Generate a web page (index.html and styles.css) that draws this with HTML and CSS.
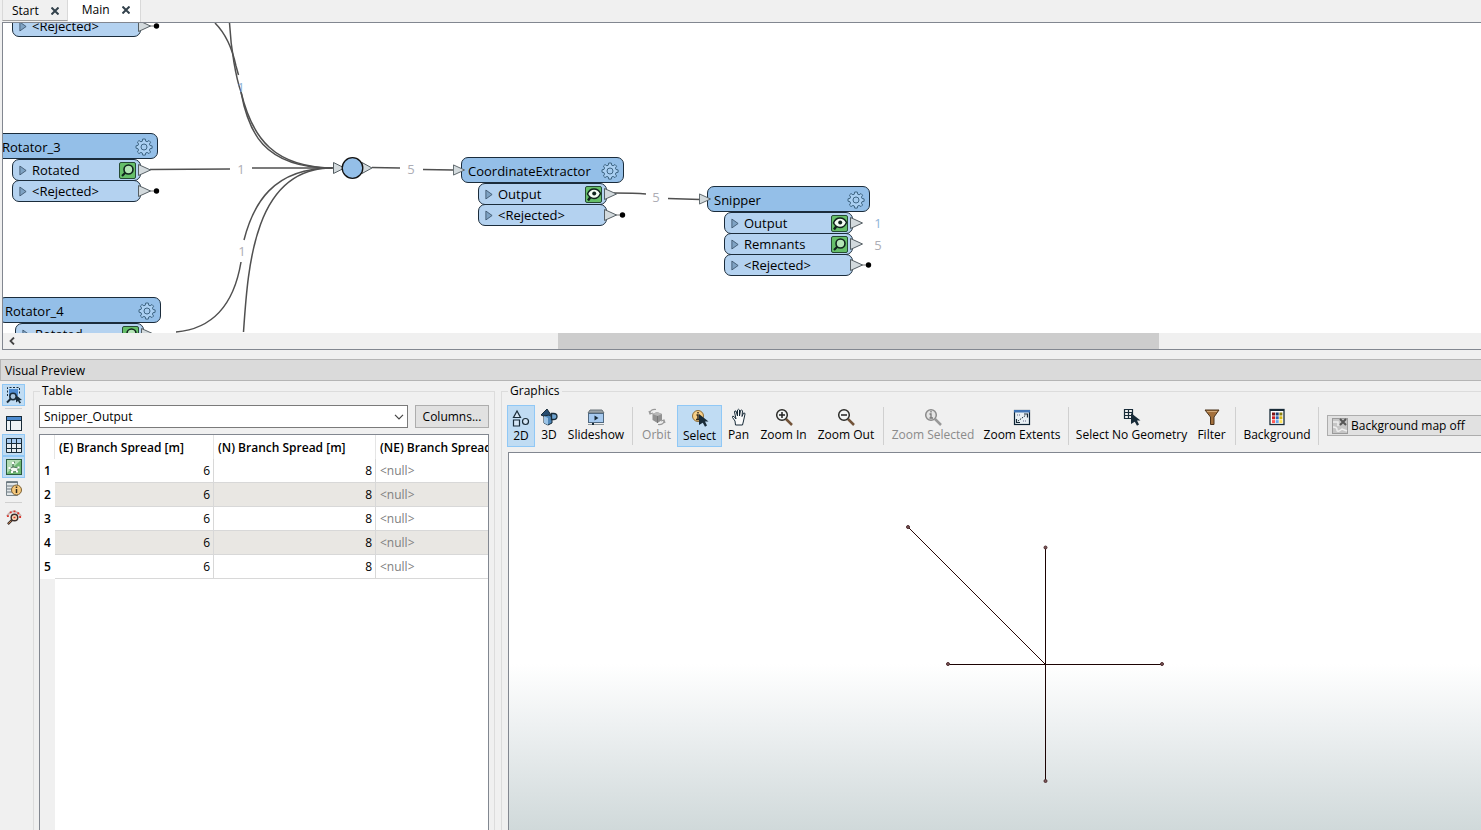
FILE: index.html
```html
<!DOCTYPE html>
<html lang="en">
<head>
<meta charset="utf-8">
<title>Workspace - Main</title>
<link rel="stylesheet" href="styles.css">
</head>
<body>
<svg class="defs" aria-hidden="true">
  <symbol id="gear" viewBox="0 0 18 18"><path d="M7.700 1h2.600l.4 2.200 1.400.6 1.900-1.300 1.600 1.700-1.200 1.900.6 1.400 2.100.4v2.400l-2.100.4-.6 1.400 1.200 1.900-1.600 1.600-1.900-1.200-1.400.6-.4 2.100H7.700l-.4-2.100-1.400-.6L4 15.600 2.400 14l1.200-1.900-.6-1.400L1 10.200V7.800l2-.4.6-1.400L2.400 4.100 4 2.500l1.900 1.300 1.400-.6z" fill="#abd0f2" stroke="#3f6684" stroke-width="1"/><circle cx="9" cy="9" r="3" fill="#a5cbee" stroke="#3f6684"/></symbol>
  <symbol id="play" viewBox="0 0 9 12"><path d="M1 1l7 5-7 5z" fill="#7fa3c4" stroke="#3f5870"/></symbol>
  <symbol id="out" viewBox="0 0 13 12"><path d="M.5.5l12 5.500-12 5.500z" fill="#d3dadd" stroke="#555e63"/></symbol>
  <symbol id="stop" viewBox="0 0 22 12"><path d="M12 6h5" stroke="#777"/><path d="M.5.5l12 5.500-12 5.500z" fill="#d3dadd" stroke="#555e63"/><circle cx="18.500" cy="6" r="2.700" fill="#000"/></symbol>
  <symbol id="lens" viewBox="0 0 17 17"><rect x=".5" y=".5" width="16" height="16" rx="1.500" fill="#66bf69" stroke="#254b34"/><path d="M6.500 10.500L3 14" stroke="#10241d" stroke-width="2.200"/><circle cx="9.500" cy="7.500" r="4.500" fill="#b5e6b7" stroke="#10241d" stroke-width="1.600"/></symbol>
  <symbol id="eye" viewBox="0 0 17 17"><rect x=".5" y=".5" width="16" height="16" rx="1.500" fill="#66bf69" stroke="#254b34"/><path d="M5.500 11L3 14.500" stroke="#10241d" stroke-width="2.400"/><path d="M2.500 8Q4.500 3 9 3q4.500 0 6.500 4.500Q13.500 12.500 9 12.500 5 12.500 2.500 8z" fill="#f3fbf3" stroke="#10241d" stroke-width="1.500"/><circle cx="9.200" cy="7.500" r="2" fill="#10241d"/></symbol>
  <symbol id="cursor" viewBox="0 0 10 13"><path d="M0 0l9.500 7.500H6l2 4-2 1.200-2.200-4L0 11z" fill="#182b38"/></symbol>
</svg>

<nav class="tabs">
  <div class="tab"><button class="tab-name">Start</button><button class="tab-close" aria-label="Close Start"><svg width="8" height="8" viewBox="0 0 8 8"><path d="M.5.5l7 7M7.500.5l-7 7"/></svg></button></div>
  <div class="tab current"><button class="tab-name">Main</button><button class="tab-close" aria-label="Close Main"><svg width="8" height="8" viewBox="0 0 8 8"><path d="M.5.5l7 7M7.500.5l-7 7"/></svg></button></div>
</nav>

<section class="workspace">
  <div class="canvas">
    <svg class="wires" width="1478" height="310" viewBox="3 23 1478 310">
      <g fill="none" stroke="#505050" stroke-width="1.500">
        <path d="M215 23C228 36 233 52 236 66L238.500 75M241 92C252 138 274 168 335 168"/>
        <path d="M229.500 23C231 50 236 78 241 92C248 130 262 168 332 168"/>
        <path d="M150 169.500L230 169M252 168H334"/>
        <path d="M176 332C222 328 236 292 241 262M244 240C253 205 272 168 332 168"/>
        <path d="M243.500 332C248 266 254 168 332 168"/>
        <path d="M372 167.500L400 168M423 169.500L453 170"/>
        <path d="M614 193C625 193 635 193 646 194M668 198.500L700 199.500"/>
      </g>
      <path d="M333.500 162.500l11 5.500-11 5.500zM362 162.500l10 5.500-10 5.500z" fill="#d3dadd" stroke="#555e63"/>
      <circle cx="352.500" cy="168" r="10.300" fill="#94bfe8" stroke="#111" stroke-width="1.300"/>
      <g class="counts">
        <text class="fresh" x="241" y="92">1</text><text x="241" y="174">1</text><text x="242" y="256">1</text>
        <text x="411" y="174">5</text><text x="656" y="202">5</text>
        <text class="fresh" x="878" y="228">1</text><text x="878" y="250">5</text>
      </g>
    </svg>

    <article class="node rotator-2">
      <div class="port"><svg class="play"><use href="#play"/></svg>&lt;Rejected&gt;<svg class="stop"><use href="#stop"/></svg></div>
    </article>
    <article class="node rotator-3">
      <h3 class="node-title">Rotator_3<svg class="gear"><use href="#gear"/></svg></h3>
      <div class="port"><svg class="play"><use href="#play"/></svg>Rotated<svg class="lens"><use href="#lens"/></svg><svg class="out"><use href="#out"/></svg></div>
      <div class="port"><svg class="play"><use href="#play"/></svg>&lt;Rejected&gt;<svg class="stop"><use href="#stop"/></svg></div>
    </article>
    <article class="node rotator-4">
      <h3 class="node-title">Rotator_4<svg class="gear"><use href="#gear"/></svg></h3>
      <div class="port"><svg class="play"><use href="#play"/></svg>Rotated<svg class="lens"><use href="#lens"/></svg><svg class="out"><use href="#out"/></svg></div>
    </article>
    <article class="node extractor">
      <h3 class="node-title"><svg class="in"><use href="#out"/></svg>CoordinateExtractor<svg class="gear"><use href="#gear"/></svg></h3>
      <div class="port"><svg class="play"><use href="#play"/></svg>Output<svg class="lens"><use href="#eye"/></svg><svg class="out"><use href="#out"/></svg></div>
      <div class="port"><svg class="play"><use href="#play"/></svg>&lt;Rejected&gt;<svg class="stop"><use href="#stop"/></svg></div>
    </article>
    <article class="node snipper">
      <h3 class="node-title"><svg class="in"><use href="#out"/></svg>Snipper<svg class="gear"><use href="#gear"/></svg></h3>
      <div class="port"><svg class="play"><use href="#play"/></svg>Output<svg class="lens"><use href="#eye"/></svg><svg class="out"><use href="#out"/></svg></div>
      <div class="port"><svg class="play"><use href="#play"/></svg>Remnants<svg class="lens"><use href="#lens"/></svg><svg class="out"><use href="#out"/></svg></div>
      <div class="port"><svg class="play"><use href="#play"/></svg>&lt;Rejected&gt;<svg class="stop"><use href="#stop"/></svg></div>
    </article>
  </div>
  <div class="scrollbar">
    <button class="scroll-left" aria-label="Scroll left"><svg width="6" height="8" viewBox="0 0 6 8"><path d="M5 .5L1.500 4 5 7.500" fill="none" stroke="#444" stroke-width="1.800"/></svg></button>
    <div class="track"><div class="thumb"></div></div>
  </div>
</section>

<h2 class="preview-title">Visual Preview</h2>

<main class="preview">
  <div class="side">
    <button class="tool on" aria-label="Inspect selection"><svg width="18" height="18" viewBox="0 0 18 18"><rect x="4" y="3" width="9" height="7" fill="#4d8bd0"/><path d="M2.500 10V1.500h12V9" fill="none" stroke="#182b38" stroke-dasharray="2 1.500"/><circle cx="8" cy="10.500" r="3.200" fill="#a9c5dd" stroke="#182b38" stroke-width="1.500"/><path d="M5.500 13L2 16.500" stroke="#182b38" stroke-width="2"/><path d="M11 9l6 5-2.500.3 1.500 2.500-1.500.7-1.500-2.500-2 1.500z" fill="#182b38"/></svg></button>
    <hr>
    <button class="tool" aria-label="Panels"><svg width="16" height="15" viewBox="0 0 16 15"><rect x=".5" y=".5" width="15" height="14" fill="#eef2f4" stroke="#182b38"/><path d="M1 1h14v3H1z" fill="#4d8bd0"/><path d="M.5 4.500h15M4.500 4.500v10" stroke="#182b38"/></svg></button>
    <button class="tool on" aria-label="Table view"><svg width="16" height="15" viewBox="0 0 16 15"><path d="M.5.500h15v14H.5z" fill="#e6ecf0"/><path d="M1 1h14v4H1z" fill="#a6caf0"/><path d="M.5.500h15v14H.5zM.5 5.500h15M.5 10.500h15M5.500 .5v14M10.500 .5v14" fill="none" stroke="#182b38"/></svg></button>
    <button class="tool on" aria-label="Graphics view"><svg width="16" height="16" viewBox="0 0 16 16"><rect x=".5" y=".5" width="15" height="15" fill="#6fb873" stroke="#285a3c"/><path d="M1 1h14L1 14z" fill="#b3dcb4"/><path d="M3.500 9.500L7 8l5.500 1-1.500 3.500-5 .5z" fill="#f4faf3" stroke="#53785e"/><path d="M7 8V3.500l2-.5" fill="none" stroke="#33583e"/><path d="M2.500 8h2v2h-2zM11.500 7.500h2v2h-2zM10 11.500h2v2h-2zM5 12h2v2H5zM6 3h2v2H6z" fill="#fff"/></svg></button>
    <button class="tool" aria-label="Feature information"><svg width="16" height="16" viewBox="0 0 16 16"><path d="M.5.500h11v14H.5z" fill="#e1e6e8" stroke="#7a868d"/><path d="M0 1.500h12M1 5h10M1 8h8M1 11h8" stroke="#6b777e"/><circle cx="10.500" cy="9" r="5" fill="#f5c77a" stroke="#7a6035"/><path d="M10.500 8v4M10.500 5.500V7" stroke="#332a1c" stroke-width="1.500"/></svg></button>
    <hr>
    <button class="tool" aria-label="Inspect problems"><svg width="16" height="17" viewBox="0 0 17 17"><path d="M1 7q7-10 15 0" fill="none" stroke="#c9b5b2" stroke-width="2"/><path d="M4 3h2M8 2h2M12 4h2M14 8h2M1 7h2" stroke="#d9342b" stroke-width="2"/><circle cx="9" cy="8.500" r="3.500" fill="#f6d3b3" stroke="#3b2e2a" stroke-width="1.500"/><path d="M6.500 11L2 15.500" stroke="#3b2e2a" stroke-width="2.500"/><path d="M5.500 12l-3 3" stroke="#d08a4e"/><path d="M8 8.500h2" stroke="#d9342b" stroke-width="1.500"/></svg></button>
  </div>

  <fieldset class="group table-group">
    <legend>Table</legend>
    <div class="picker">
      <div class="combo"><select aria-label="Feature type"><option>Snipper_Output</option></select><svg width="10" height="6" viewBox="0 0 10 6"><path d="M1 .8l4 4 4-4" fill="none" stroke="#444" stroke-width="1.200"/></svg></div>
      <button class="columns">Columns...</button>
    </div>
    <div class="grid">
      <table>
        <colgroup><col class="c-row"><col class="c-e"><col class="c-n"><col></colgroup>
        <thead><tr><th></th><th>(E) Branch Spread [m]</th><th>(N) Branch Spread [m]</th><th>(NE) Branch Spread</th></tr></thead>
        <tbody>
          <tr><th>1</th><td>6</td><td>8</td><td class="null">&lt;null&gt;</td></tr>
          <tr><th>2</th><td>6</td><td>8</td><td class="null">&lt;null&gt;</td></tr>
          <tr><th>3</th><td>6</td><td>8</td><td class="null">&lt;null&gt;</td></tr>
          <tr><th>4</th><td>6</td><td>8</td><td class="null">&lt;null&gt;</td></tr>
          <tr><th>5</th><td>6</td><td>8</td><td class="null">&lt;null&gt;</td></tr>
        </tbody>
      </table>
      <div class="gutter"></div>
    </div>
  </fieldset>

  <fieldset class="group graphics-group">
    <legend>Graphics</legend>
    <div class="toolbar">
      <button class="cmd w28 on"><svg viewBox="0 0 18 18"><path d="M5 2L1.500 8.500h7zM1.500 11h6v6h-6z" fill="#d5e6f5" stroke="#182b38" stroke-width="1.200"/><circle cx="13.500" cy="12.500" r="3" fill="#d5e6f5" stroke="#182b38" stroke-width="1.200"/></svg>2D</button>
      <button class="cmd w28"><svg viewBox="0 0 18 18"><path d="M7 1L1 7l5 2 5-2z" fill="#274d70" stroke="#182b38"/><path d="M4 8l5-1 3 2v6l-4 2-4-2z" fill="#4f87b8" stroke="#182b38"/><path d="M4 8l4 2v7l-4-2z" fill="#9cc4e6"/><path d="M11.500 5.500h2q3.500 0 3.500 3t-3.500 3h-2z" fill="#6fa3cf" stroke="#182b38" stroke-width="1.300"/></svg>3D</button>
      <button class="cmd w66"><svg viewBox="0 0 18 18"><path d="M3 2h12l2 3H1z" fill="#9aa3a8" stroke="#6b757b"/><rect x="1.500" y="5.500" width="15" height="9" fill="#a6caf0" stroke="#4f6880"/><path d="M7.500 7.500l4 2.500-4 2.500z" fill="#182b38"/><path d="M1 16.500h16" stroke="#8e989d"/><path d="M5 15h2v2H5z" fill="#182b38"/></svg>Slideshow</button>
      <i class="sep"></i>
      <button class="cmd w41" disabled><svg viewBox="0 0 18 18"><path d="M4.500 6L9 4l5 2v6l-4.500 3-5-3z" fill="#929292"/><path d="M4.500 6l5 2L14 6 9 4z" fill="#b8b8b8"/><path d="M9.500 8v7" stroke="#777"/><path d="M8 1.500Q2 1 2 5.500M1 3l1 3 3-1M10 16.500q6 .5 6-4M17 15l-1-3-3 1" fill="none" stroke="#999" stroke-width="1.200"/></svg>Orbit</button>
      <button class="cmd w45 on"><svg viewBox="0 0 18 18"><circle cx="7" cy="7" r="5.500" fill="#f7cf86" stroke="#8a6a37"/><path d="M5.500 6H7v4M5 10.500h4M7 3v1.500" fill="none" stroke="#332a1c" stroke-width="1.500"/><use href="#cursor" x="8" y="5" width="10" height="13"/></svg>Select</button>
      <button class="cmd w33"><svg viewBox="0 0 18 18"><path d="M5.500 17L5 13 2.500 9.500Q2 7.500 4 8.500L6 11 4.500 4Q4.500 2.500 6 3l1.500 5L7.500 2Q8.500.500 9.500 2v6l1-5.500q1.300-1 2 .2L12 8.500 13.500 5q1.500-.5 1.500 1L13.500 13 12.500 17z" fill="#fafafa" stroke="#182b38"/></svg>Pan</button>
      <button class="cmd w57"><svg viewBox="0 0 18 18"><path d="M11 11l6 6" stroke="#73543a" stroke-width="2.500"/><circle cx="7" cy="7" r="5.300" fill="#f3f6f6" stroke="#2b2b28" stroke-width="1.500"/><path d="M4 7h6M7 4v6" stroke="#222" stroke-width="1.500"/></svg>Zoom In</button>
      <button class="cmd w68"><svg viewBox="0 0 18 18"><path d="M11 11l6 6" stroke="#73543a" stroke-width="2.500"/><circle cx="7" cy="7" r="5.300" fill="#f3f6f6" stroke="#2b2b28" stroke-width="1.500"/><path d="M4 7h6" stroke="#222" stroke-width="1.500"/></svg>Zoom Out</button>
      <i class="sep"></i>
      <button class="cmd w92" disabled><svg viewBox="0 0 18 18"><path d="M11 11l6 6" stroke="#999" stroke-width="2.500"/><circle cx="7" cy="7" r="5.300" fill="#e4e4e4" stroke="#8b8b8b" stroke-width="1.500"/><path d="M5.500 6H7v4M5.500 10h3.500M7 3v1.500" fill="none" stroke="#777" stroke-width="1.300"/></svg>Zoom Selected</button>
      <button class="cmd w86"><svg viewBox="0 0 18 18"><rect x="1.500" y="2.500" width="15" height="14" fill="#e8f0f4" stroke="#0c2233" stroke-width="1.200"/><path d="M1 2h16v2.500H1z" fill="#3f74b5"/><path d="M5 13l8-6" stroke="#182b38" stroke-dasharray="1.500 1"/><path d="M3.500 11v3.500h3.500M11 6h3.500v3.500" fill="none" stroke="#182b38" stroke-width="1.200"/><path d="M4 7h4M10 13h4" stroke="#668" stroke-dasharray="1 1"/></svg>Zoom Extents</button>
      <i class="sep"></i>
      <button class="cmd w119"><svg viewBox="0 0 18 18"><path d="M1.500 1.500h8v9h-8zM1.500 4.500h8M1.500 7.500h8M5.500 1.500v9" fill="none" stroke="#182b38" stroke-width="1.200"/><use href="#cursor" x="8" y="5" width="10" height="13"/></svg>Select No Geometry</button>
      <button class="cmd w41"><svg viewBox="0 0 18 18"><path d="M2 2h14l-5 7v7.500H7.500V9z" fill="#a3703c" stroke="#4c341d"/><path d="M4 3.500h10" stroke="#d2a878"/></svg>Filter</button>
      <i class="sep"></i>
      <button class="cmd w76"><svg viewBox="0 0 18 18"><rect x="2" y="1.500" width="14" height="15" fill="#fff" stroke="#182b38" stroke-width="1.300"/><path d="M2 1h14v2H2z" fill="#182b38"/><path d="M4 4.500h3v3H4z" fill="#7d1416"/><path d="M7.700 4.500h3v3h-3z" fill="#173a75"/><path d="M11.400 4.500h3v3h-3z" fill="#8a8010"/><path d="M4 8.300h3v3H4z" fill="#d01f20"/><path d="M7.700 8.300h3v3h-3z" fill="#2f65b5"/><path d="M11.400 8.300h3v3h-3z" fill="#d8b80f"/><path d="M4 12.100h3v3H4z" fill="#ff5a55"/><path d="M7.700 12.100h3v3h-3z" fill="#6aa5e8"/><path d="M11.400 12.100h3v3h-3z" fill="#ffe35a"/></svg>Background</button>
      <i class="sep"></i>
      <button class="map"><svg width="16" height="16" viewBox="0 0 16 16"><rect x=".5" y=".5" width="15" height="15" fill="#c6c6c6" stroke="#9b9b9b"/><path d="M1 9q4 0 4 3t5-1l5 2M1 4h5v4" fill="none" stroke="#efefef" stroke-width="1.500"/><path d="M8 1l6 6M14 1L8 7" stroke="#555" stroke-width="2"/></svg>Background map off</button>
    </div>
    <div class="view">
      <svg width="972" height="377" viewBox="509 453 972 377">
        <path d="M908 527l137 137" stroke="#2a0808" fill="none" shape-rendering="crispEdges"/>
        <path d="M1045.500 547v234M948 664.500h214" stroke="#1c0303" fill="none" shape-rendering="crispEdges"/>
        <g fill="#7c5759" stroke="#4d2c2e"><circle cx="908" cy="527" r="1.500"/><circle cx="1045.500" cy="547.500" r="1.500"/><circle cx="948" cy="664" r="1.500"/><circle cx="1162" cy="664" r="1.500"/><circle cx="1045.500" cy="781" r="1.500"/></g>
      </svg>
    </div>
  </fieldset>
</main>
</body>
</html>
```
FILE: styles.css
```css
* { box-sizing: border-box; }
body {
  margin: 0;
  height: 100vh;
  display: flex;
  flex-direction: column;
  overflow: hidden;
  background: #f0f0f0;
  color: #000;
  font: 12px/16px "Open Sans", "Noto Sans", sans-serif;
}
button, select { font: inherit; color: inherit; margin: 0; padding: 0; border: 0; background: none; }
svg { display: block; flex: none; }
h2, h3 { margin: 0; font: inherit; }
.defs { position: absolute; width: 0; height: 0; }

/* Tabs */
.tabs { display: flex; height: 22px; padding-left: 2px; flex: none; }
.tab { display: flex; align-items: center; gap: 12px; height: 21px; padding: 1px 8px 0 9px; border: 1px solid #d9d9d9; border-top: 0; border-bottom-color: #a0a0a0; }
.tab.current { height: 22px; padding: 0 10px 2px 14px; background: #fff; border-bottom: 0; border-left: 0; }
.tab-close path { stroke: #33424c; stroke-width: 2; }

/* Workspace */
.workspace { flex: none; margin-left: 2px; border: 1px solid #828790; border-right: 0; background: #fff; }
.canvas { position: relative; height: 310px; overflow: hidden; font-size: 13px; }
.counts text { font-size: 13px; fill: #adadb5; text-anchor: middle; }
.counts .fresh { fill: #8fb4d8; }
.node { position: absolute; width: 163px; }
.rotator-2 { left: -8px; top: -8px; }
.rotator-3 { left: -8px; top: 110px; }
.rotator-4 { left: -5px; top: 274px; }
.extractor { left: 458px; top: 134px; }
.snipper { left: 704px; top: 163px; }
.node-title {
  position: relative;
  display: flex;
  align-items: center;
  justify-content: space-between;
  height: 26px;
  padding: 2px 4px 0 6px;
  border: 1px solid #1b2c3b;
  border-radius: 7px;
  background: #94bfe8;
}
.gear { width: 18px; height: 18px; }
.port {
  position: relative;
  display: flex;
  align-items: center;
  gap: 5px;
  height: 22px;
  width: 129px;
  margin: 0 0 -1px 17px;
  padding-left: 6px;
  border: 1px solid #1b2c3b;
  border-radius: 7px;
  background: #b4d2f0;
}
.play { width: 8px; height: 11px; }
.lens { width: 17px; height: 17px; margin-left: auto; margin-right: 4px; }
.out, .stop, .in { position: absolute; height: 12px; top: 4px; }
.out { width: 13px; left: 125px; }
.stop { width: 22px; left: 125px; }
.in { width: 12px; left: -9px; top: 6px; }
.scrollbar { display: flex; height: 16px; background: #f0f0f0; }
.scroll-left { width: 17px; display: grid; place-items: center; }
.track { flex: 1; display: grid; grid-template-columns: 538fr 601fr 322fr; }
.thumb { grid-column: 2; background: #cdcdcd; }

/* Preview */
.preview-title { flex: none; height: 22px; margin-top: 9px; padding: 3px 4px 1px; border: 1px solid #b5b5b5; border-right: 0; background: #dadada; }
.preview { flex: 1; min-height: 0; display: grid; grid-template-columns: 26px 463px minmax(0, 1fr); column-gap: 6px; }
.side { display: flex; flex-direction: column; align-items: flex-start; padding: 3px 0 0 2px; }
.side hr { width: 17px; height: 1px; margin: 2px 0 3px 3px; border: 0; background: #d0d0d0; }
.tool { display: grid; place-items: center; width: 23px; height: 22px; border: 1px solid transparent; }
.on { background: #c0dcf3; border: 1px solid #90c8f6; }
.group { display: flex; flex-direction: column; min-width: 0; min-height: 0; margin: 2px 0 0; border: 1px solid #dcdcdc; border-bottom: 0; }
.group legend { padding: 0 2px; }
.table-group { padding: 6px 5px 0; margin-left: 1px; }
.table-group legend { margin-left: 1px; }
.graphics-group { padding: 6px 0 0 5px; border-right: 0; }
.graphics-group legend { margin-left: 1px; }
.picker { display: flex; gap: 7px; }
.combo { position: relative; flex: 1; }
.combo select { appearance: none; width: 100%; height: 23px; padding: 0 20px 0 4px; background: #fff; border: 1px solid #7a7a7a; border-radius: 0; }
.combo svg { position: absolute; right: 4px; top: 9px; pointer-events: none; }
.columns { width: 74px; height: 23px; background: #e1e1e1; border: 1px solid #adadad; }
.grid { flex: 1; display: flex; flex-direction: column; margin-top: 6px; border: 1px solid #828790; border-bottom: 0; background: #fff; overflow: hidden; }
.gutter { flex: 1; width: 15px; background: #f0f0f0; }
table { width: 100%; table-layout: fixed; border-collapse: separate; border-spacing: 0; }
.c-row { width: 15px; }
.c-e { width: 159px; }
.c-n { width: 162px; }
th, td { height: 24px; padding: 0 4px; white-space: nowrap; overflow: hidden; }
th { font-weight: 600; text-align: left; }
thead th { padding-top: 2px; border-right: 1px solid #e5e5e5; }
tbody th { padding: 0 0 0 4px; }
td { text-align: right; padding: 0 3px; border-right: 1px solid #d8d8d8; border-bottom: 1px solid #d8d8d8; }
tr > :last-child { border-right: 0; }
tbody tr:nth-child(even) td { background: #e9e7e3; }
td.null { text-align: left; padding-left: 4px; color: #808080; }

/* Graphics */
.toolbar { display: flex; height: 42px; }
.cmd { flex: none; display: flex; flex-direction: column; align-items: center; gap: 1px; padding-top: 2px; white-space: nowrap; border: 1px solid transparent; }
.cmd.on { padding-top: 3px; border-color: #90c8f6; }
.cmd svg { width: 18px; height: 18px; }
.cmd:disabled { color: #8b8b8b; }
.w28 { width: 28px; }
.w33 { width: 33px; }
.w41 { width: 41px; }
.w45 { width: 45px; }
.w57 { width: 57px; }
.w66 { width: 66px; }
.w68 { width: 68px; }
.w76 { width: 76px; }
.w86 { width: 86px; }
.w92 { width: 92px; }
.w119 { width: 119px; }
.sep { flex: none; width: 1px; margin: 2px 3px; background: #d0d0d0; }
.map { flex: 1 0 auto; display: flex; align-items: center; gap: 3px; height: 21px; margin: 10px 0 0 5px; padding-left: 4px; background: #e1e1e1; border: 1px solid #adadad; border-right: 0; }
.view { flex: 1; min-height: 0; margin: 5px 0 0 1px; border: 1px solid #828790; border-width: 1px 0 0 1px; overflow: hidden; background: linear-gradient(#fff 56%, #eef1f2 72%, #d0d9da); }
```
